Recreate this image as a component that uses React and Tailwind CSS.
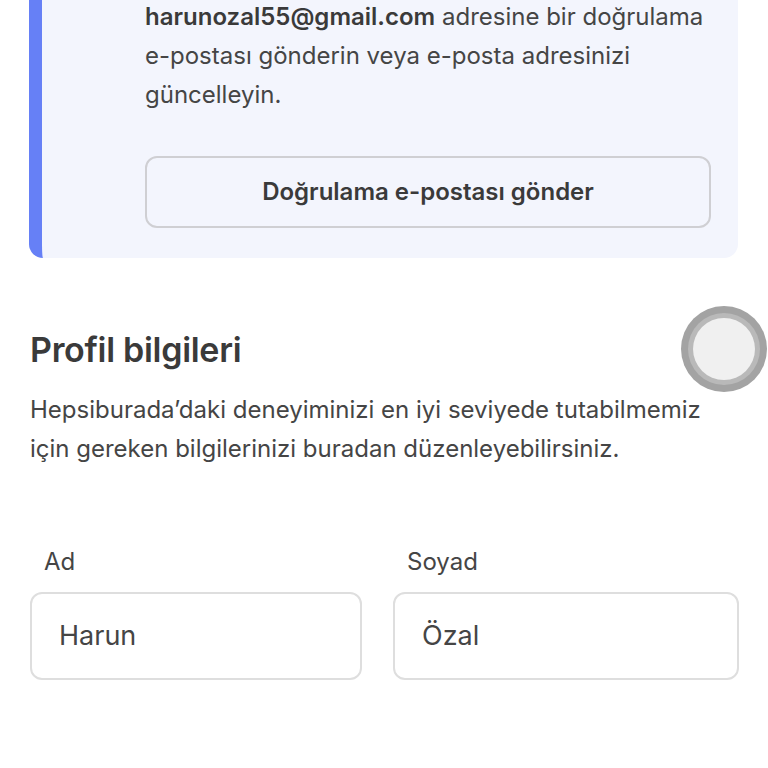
export default function App() {
  return (
    <div className="relative min-h-[768px] w-[768px] overflow-hidden bg-white text-[#454545]" style={{ fontFamily: "Inter, 'Noto Sans', sans-serif" }}>
      <div className="mx-[29px] -mt-[3px] w-[709px] rounded-b-[14px] border-l-[13px] border-[#6680f6] bg-[#f3f5fd] pb-[30px] pl-[103px] pr-[20px]">
        <p className="text-[24px] leading-[39px]">
          <span className="font-semibold text-[#3a3a3a]">harunozal55@gmail.com</span> adresine bir doğrulama e-postası gönderin veya e-posta adresinizi güncelleyin.
        </p>
        <button className="mt-[42px] flex h-[72px] w-[566px] items-center justify-center rounded-[12px] border-2 border-[#cfcfd3] bg-[#f3f5fd] text-[24px] font-semibold text-[#3a3a3a]">
          Doğrulama e-postası gönder
        </button>
      </div>

      <div className="px-[30px]">
        <h2 className="mt-[72px] text-[34px] font-semibold leading-[40px] tracking-[-0.3px] text-[#3a3a3a]">Profil bilgileri</h2>
        <p className="mt-[20px] w-[700px] text-[24px] leading-[39px]">
          Hepsiburada’daki deneyiminizi en iyi seviyede tutabilmemiz için gereken bilgilerinizi buradan düzenleyebilirsiniz.
        </p>

        <div className="mt-[79px] grid grid-cols-[332px_346px] gap-x-[31px]">
          <div>
            <label className="block pl-[14px] text-[24px] leading-[30px]">Ad</label>
            <div className="mt-[15px] flex h-[88px] items-center rounded-[12px] border-2 border-[#dedede] px-[27px] text-[27px]">Harun</div>
          </div>
          <div>
            <label className="block pl-[14px] text-[24px] leading-[30px]">Soyad</label>
            <div className="mt-[15px] flex h-[88px] items-center rounded-[12px] border-2 border-[#dedede] px-[27px] text-[27px]">Özal</div>
          </div>
        </div>
      </div>

      <div className="absolute left-[681px] top-[306px] flex h-[86px] w-[86px] items-center justify-center rounded-full bg-[#a3a3a3]">
        <div className="flex h-[72px] w-[72px] items-center justify-center rounded-full bg-[#b9b9b9]">
          <div className="h-[62px] w-[62px] rounded-full bg-[#f0f0f0]" />
        </div>
      </div>
    </div>
  );
}
